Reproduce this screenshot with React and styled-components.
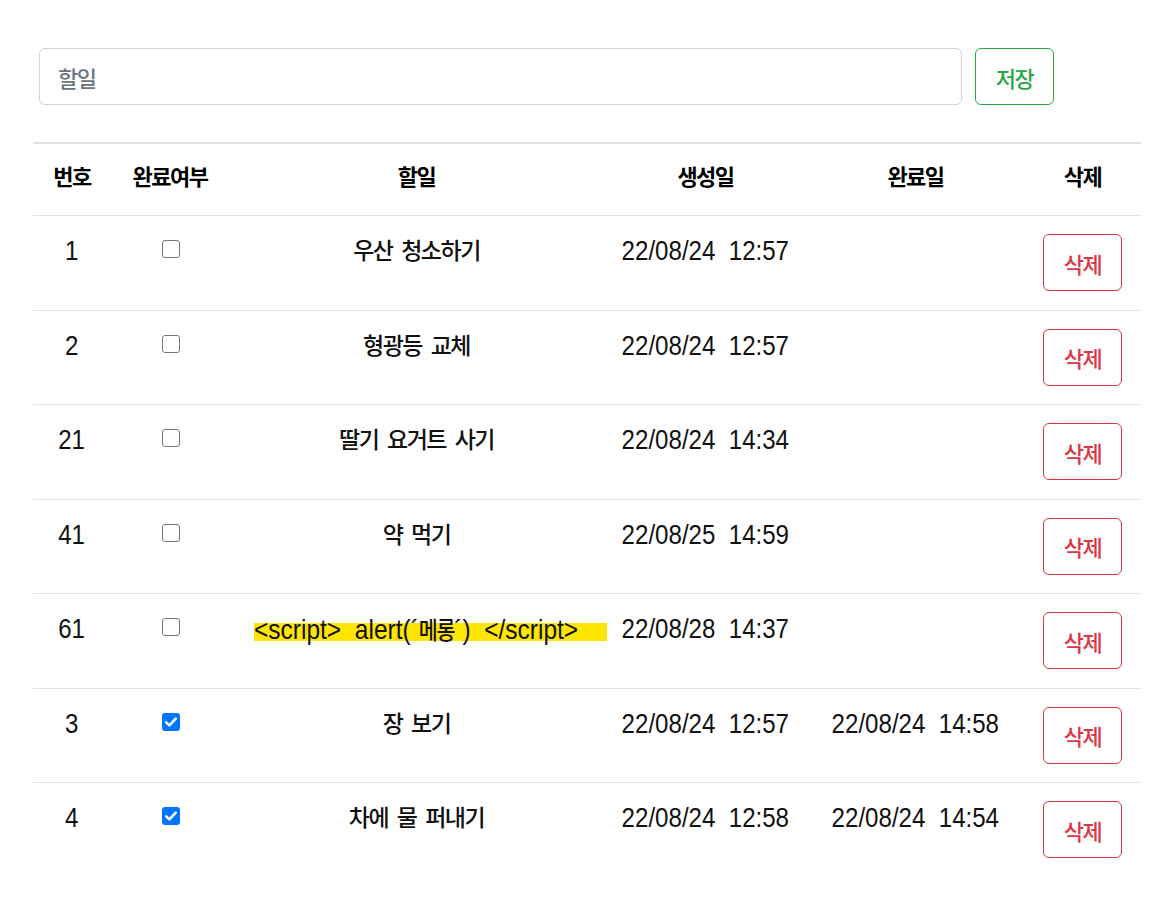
import React from 'react';
import styled, { createGlobalStyle } from 'styled-components';

const GlobalStyle = createGlobalStyle`
  body {
    margin: 0;
    background: #ffffff;
    color: #212529;
    font-family: "Noto Sans CJK KR", "Noto Sans", sans-serif;
  }
`;

const Page = styled.div`
  padding: 48px 24px 40px 33px;
`;

const Form = styled.form`
  display: grid;
  grid-template-columns: 1fr 79px;
  gap: 13px;
  width: 1015px;
  margin: 0 0 37px 6px;
`;

const Input = styled.input`
  box-sizing: border-box;
  height: 57px;
  padding: 0 18px;
  border: 1px solid #ced4da;
  border-radius: 6px;
  font-family: "Noto Sans CJK KR", sans-serif;
  font-size: 22px;
  font-weight: 500;
  letter-spacing: -1.5px;
  color: #212529;
  outline: none;

  &::placeholder {
    color: #6c757d;
  }
`;

const OutlineButton = styled.button`
  box-sizing: border-box;
  width: 79px;
  height: 57px;
  padding: 0;
  background: #ffffff;
  border: 1px solid ${(p) => p.$color};
  border-radius: 6px;
  color: ${(p) => p.$color};
  font-family: "Noto Sans CJK KR", sans-serif;
  font-size: 22px;
  font-weight: 500;
  letter-spacing: -1.5px;
  cursor: pointer;
`;

const Table = styled.table`
  width: 100%;
  table-layout: fixed;
  border-collapse: collapse;
  border-top: 2px solid #dee2e6;

  tbody tr:last-child td {
    border-bottom: none;
  }
`;

const Th = styled.th`
  padding: 13px 0 22px;
  height: 36px;
  line-height: 36px;
  border-bottom: 1px solid #dee2e6;
  font-family: "Noto Sans CJK KR", sans-serif;
  font-size: 22px;
  font-weight: 700;
  letter-spacing: -1.5px;
  text-align: center;
  color: #000;
`;

const Td = styled.td`
  padding: 18px 18px 18.5px;
  vertical-align: top;
  text-align: center;
  line-height: 34px;
  border-bottom: 1px solid #dee2e6;
  color: #111;
`;

const NarrowText = styled.span`
  display: inline-block;
  margin: 0 -24px;
  font-family: "Liberation Sans", Arial, sans-serif;
  font-size: 28px;
  line-height: 34px;
  white-space: pre;
  transform: scaleX(0.86);
`;

const KoText = styled.div`
  font-family: "Noto Sans CJK KR", sans-serif;
  font-size: 23px;
  font-weight: 500;
  line-height: 30px;
  letter-spacing: -1.5px;
  word-spacing: 5px;
  color: #111;
`;

const Mark = styled.div`
  margin: 0 -21px 0 7px;
  text-align: left;
  background: linear-gradient(
    to bottom,
    transparent 11px,
    #ffe600 11px,
    #ffe600 29px,
    transparent 29px
  );
`;

const MarkText = styled.span`
  display: inline-block;
  font-family: "Liberation Sans", Arial, sans-serif;
  font-size: 28.5px;
  line-height: 34px;
  white-space: pre;
  transform: scaleX(0.86);
  transform-origin: left center;

  span {
    font-family: "Noto Sans CJK KR", sans-serif;
    font-size: 24px;
    font-weight: 500;
    letter-spacing: -1.5px;
  }
`;

const Check = styled.span`
  display: inline-block;
  box-sizing: border-box;
  width: 18px;
  height: 18px;
  margin: 6px 0 0 1px;
  vertical-align: top;
  border-radius: 3px;
  border: ${(p) => (p.$checked ? 'none' : '1.5px solid #767676')};
  background: ${(p) => (p.$checked ? '#0075ff' : '#ffffff')};

  svg {
    display: block;
  }
`;

const CheckBox = ({ checked }) => (
  <Check $checked={checked} role="checkbox" aria-checked={checked}>
    {checked && (
      <svg width="18" height="18" viewBox="0 0 18 18">
        <path
          d="M4.2 9.4 L7.4 12.4 L13.8 5.6"
          fill="none"
          stroke="#ffffff"
          strokeWidth="2.6"
          strokeLinecap="round"
          strokeLinejoin="round"
        />
      </svg>
    )}
  </Check>
);

const todos = [
  { id: 1, done: false, title: '우산 청소하기', created: '22/08/24  12:57', finished: '' },
  { id: 2, done: false, title: '형광등 교체', created: '22/08/24  12:57', finished: '' },
  { id: 21, done: false, title: '딸기 요거트 사기', created: '22/08/24  14:34', finished: '' },
  { id: 41, done: false, title: '약 먹기', created: '22/08/25  14:59', finished: '' },
  { id: 61, done: false, script: true, created: '22/08/28  14:37', finished: '' },
  { id: 3, done: true, title: '장 보기', created: '22/08/24  12:57', finished: '22/08/24  14:58' },
  { id: 4, done: true, title: '차에 물 퍼내기', created: '22/08/24  12:58', finished: '22/08/24  14:54' },
];

const widths = [78, 118, 375, 203, 217, 117];

export default function App() {
  return (
    <Page>
      <GlobalStyle />
      <Form onSubmit={(e) => e.preventDefault()}>
        <Input placeholder="할일" />
        <OutlineButton type="submit" $color="#28a745">저장</OutlineButton>
      </Form>
      <Table>
        <colgroup>
          {widths.map((w, i) => (
            <col key={i} style={{ width: w }} />
          ))}
        </colgroup>
        <thead>
          <tr>
            <Th>번호</Th>
            <Th>완료여부</Th>
            <Th>할일</Th>
            <Th>생성일</Th>
            <Th>완료일</Th>
            <Th>삭제</Th>
          </tr>
        </thead>
        <tbody>
          {todos.map((t) => (
            <tr key={t.id}>
              <Td>
                <NarrowText>{t.id}</NarrowText>
              </Td>
              <Td>
                <CheckBox checked={t.done} />
              </Td>
              <Td>
                {t.script ? (
                  <Mark>
                    <MarkText>
                      {"<script>  alert(´"}
                      <span>메롱</span>
                      {"´)  </script>"}
                    </MarkText>
                  </Mark>
                ) : (
                  <KoText>{t.title}</KoText>
                )}
              </Td>
              <Td>
                <NarrowText>{t.created}</NarrowText>
              </Td>
              <Td>
                <NarrowText>{t.finished}</NarrowText>
              </Td>
              <Td>
                <OutlineButton type="button" $color="#dc3545">삭제</OutlineButton>
              </Td>
            </tr>
          ))}
        </tbody>
      </Table>
    </Page>
  );
}
